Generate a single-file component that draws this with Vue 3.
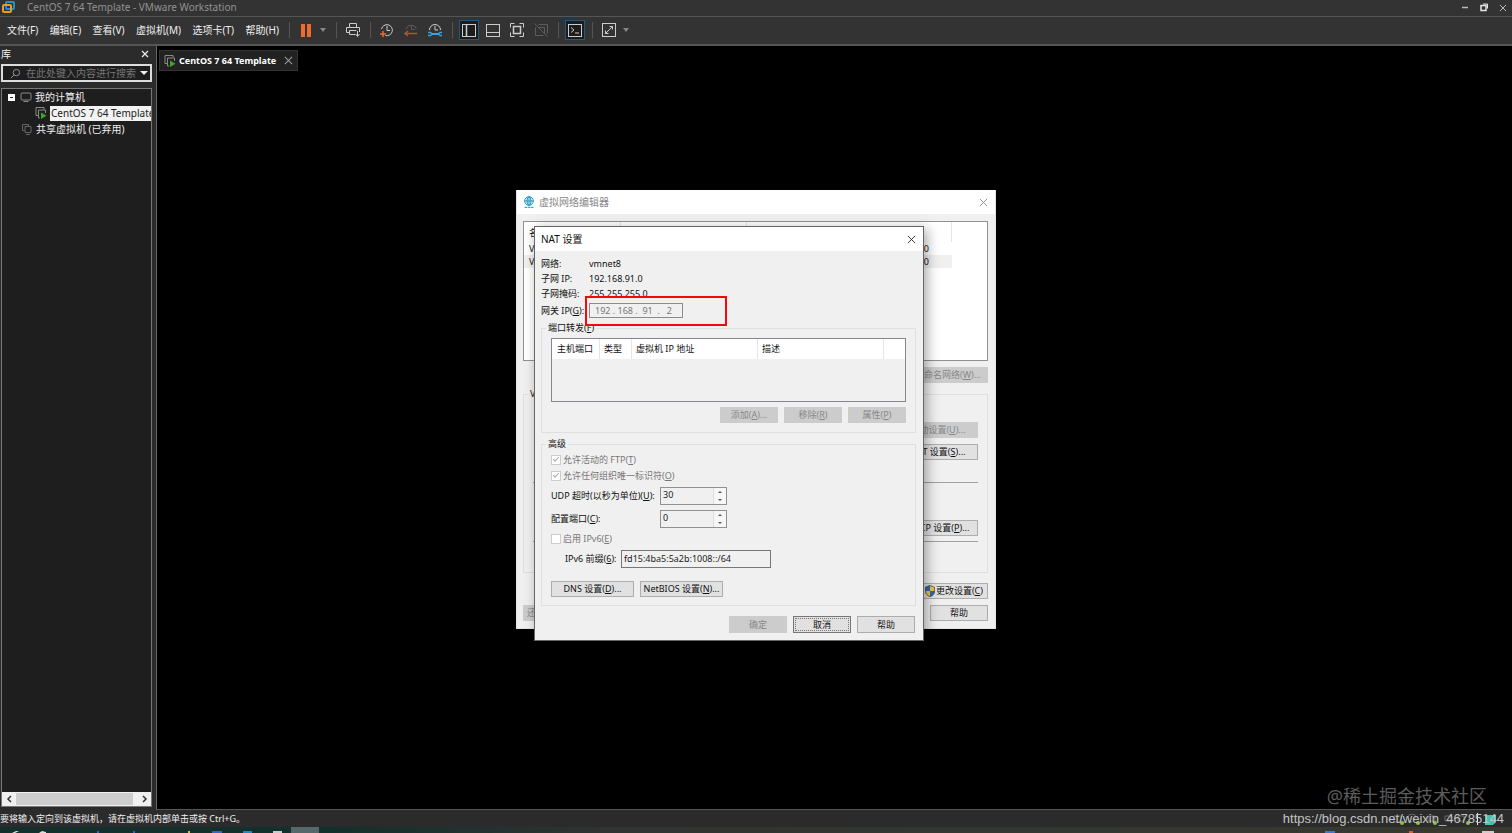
<template>
    <div class="workstation">
        <header class="titlebar">
            <svg class="titlebar__logo" viewBox="0 0 14 14" fill="none" stroke-width="2">
                <rect x="5" y="2" width="8" height="7" rx="1" stroke="#1d93c9" />
                <rect x="2" y="5" width="8" height="7" rx="1" stroke="#f39a1e" />
            </svg>
            <span class="titlebar__text">CentOS 7 64 Template - VMware Workstation</span>
            <div class="titlebar__controls">
                <button type="button" aria-label="Minimize">
                    <svg viewBox="0 0 10 10"><path d="M2 5.500h6" stroke="#bbb" stroke-width="1.500" /></svg>
                </button>
                <button type="button" aria-label="Restore">
                    <svg viewBox="0 0 10 10" fill="none" stroke="#e8e8e8"><path d="M4 2h4.500v4.500" /><rect x="2" y="3.500" width="5" height="5" stroke-width="1.500" /></svg>
                </button>
                <button type="button" aria-label="Close">
                    <svg viewBox="0 0 10 10"><path d="M2 3l6 6M8 3l-6 6" stroke="#bbb" /></svg>
                </button>
            </div>
        </header>

        <div class="toolbar">
            <nav class="menu">
                <button v-for="item in menuItems" :key="item" type="button">{{ item }}</button>
            </nav>
            <i class="sep"></i>
            <button class="tool" type="button" aria-label="Pause">
                <svg viewBox="0 0 20 20" fill="#ec6c30"><rect x="5" y="4" width="4" height="13" /><rect x="11" y="4" width="4" height="13" /></svg>
            </button>
            <i class="caret"></i>
            <i class="sep sep--wide"></i>
            <button class="tool" type="button" aria-label="Send">
                <svg viewBox="0 0 20 20"><path d="M6.500 7.500v-4h7v4M6 12.500H3.500v-5h13V12M6.500 10.500h7M6.500 10.500v4h6M14.500 11v5M12.500 14l2 2.500 2-2.500" /></svg>
            </button>
            <i class="sep"></i>
            <button class="tool" type="button" aria-label="Take snapshot">
                <svg viewBox="0 0 20 20"><path d="M4.500 9a5.500 5.500 0 1 1 4 6.500M10 6v4.500h3" /><path d="M3 14h6M6 11v6" stroke="#ec6c30" stroke-width="1.500" /></svg>
            </button>
            <button class="tool" type="button" aria-label="Revert snapshot">
                <svg viewBox="0 0 20 20"><path d="M5 9a5.500 5.500 0 0 1 10.500 0M10.500 6v3.500h3" stroke="#5d5d5d" /><path d="M4 13.500h12M7 11l-3 2.500 3 2.500" stroke="#ac5530" stroke-width="1.500" /></svg>
            </button>
            <button class="tool" type="button" aria-label="Manage snapshots">
                <svg viewBox="0 0 20 20"><path d="M4.500 10a5.500 5.500 0 1 1 11 0M10 6v4h3" /><path d="M6 14h8" stroke="#35a5df" stroke-width="2" /><path d="M3 12.500h2.500L7 14l-1.500 1.500H3M17 12.500h-2L13.500 14l1.500 1.500h2" stroke="#35a5df" stroke-width="1.500" /></svg>
            </button>
            <i class="sep"></i>
            <button class="tool tool--active" type="button" aria-label="Show library">
                <svg viewBox="0 0 20 20"><rect x="3.500" y="4.500" width="13" height="12" /><path d="M7.500 4.500v12" stroke-width="1.500" /></svg>
            </button>
            <button class="tool" type="button" aria-label="Show thumbnails">
                <svg viewBox="0 0 20 20"><rect x="3.500" y="4.500" width="13" height="12" /><path d="M3.500 12.500h13" /></svg>
            </button>
            <button class="tool" type="button" aria-label="Full screen">
                <svg viewBox="0 0 20 20"><path d="M3.500 7.500v-4h4M12.500 3.500h4v4M16.500 12.500v4h-4M7.500 16.500h-4v-4" /><rect x="6.500" y="6.500" width="7" height="7" stroke-width="1.500" /></svg>
            </button>
            <button class="tool" type="button" aria-label="Unity">
                <svg viewBox="0 0 20 20" class="dim"><path d="M7.500 4.500h9v9M4.500 7.500v8h8M7.500 7.500h6v6M3.500 3.500l13 13" /></svg>
            </button>
            <i class="sep"></i>
            <button class="tool tool--active" type="button" aria-label="Console view">
                <svg viewBox="0 0 20 20"><rect x="3.500" y="4.500" width="13" height="12" /><path d="M6 7.500l3 2.500-3 2.500M10 13h4" /></svg>
            </button>
            <i class="sep"></i>
            <button class="tool" type="button" aria-label="Stretch guest">
                <svg viewBox="0 0 20 20"><rect x="3.500" y="3.500" width="13" height="13" /><path d="M6.500 13.500l7-7M10.500 6.500h3v3M6.500 10.500v3h3" /></svg>
            </button>
            <i class="caret"></i>
        </div>

        <main class="workspace">
            <aside class="library">
                <div class="library__head">
                    <span>库</span>
                    <button type="button" aria-label="Close library">
                        <svg viewBox="0 0 10 10"><path d="M2 2l6 6M8 2l-6 6" stroke="#eee" stroke-width="1.200" /></svg>
                    </button>
                </div>
                <div class="search">
                    <svg viewBox="0 0 12 12" fill="none" stroke="#999"><circle cx="7" cy="5" r="3.500" /><path d="M4.500 7.500L1 11" /></svg>
                    <input type="text" aria-label="Search" placeholder="在此处键入内容进行搜索">
                    <i class="search__caret"></i>
                </div>
                <div class="tree">
                    <div class="tree__row">
                        <i class="tree__toggle"></i>
                        <svg class="tree__icon" viewBox="0 0 12 12" fill="none" stroke="#8a8a8a"><rect x="1" y="2" width="10" height="7" rx="1" /><path d="M3.500 10.500h5" /></svg>
                        <span>我的计算机</span>
                    </div>
                    <div class="tree__row tree__row--child">
                        <svg class="tree__icon" viewBox="0 0 12 12" fill="none" stroke="#8a8a8a"><path d="M3 8.500H1v-8h8v2" /><path d="M5 11H3.500V3h7v3" /><path d="M6 5.500l5.500 3.200L6 12z" fill="#3fa52a" stroke="none" /></svg>
                        <span class="tree__selected">CentOS 7 64 Template</span>
                    </div>
                    <div class="tree__row tree__row--shared">
                        <svg class="tree__icon" viewBox="0 0 12 12" fill="none" stroke="#666"><path d="M3.500 7.500h-2v-6h6v2M4 3.500h6v6H4zM5 11.500h4" /></svg>
                        <span>共享虚拟机 (已弃用)</span>
                    </div>
                    <div class="scrollbar">
                        <svg viewBox="0 0 12 12"><path d="M8 3L5 6l3 3" /></svg>
                        <i class="scrollbar__thumb"></i>
                        <svg viewBox="0 0 12 12"><path d="M5 3l3 3-3 3" /></svg>
                    </div>
                </div>
            </aside>
            <section class="console">
                <div class="tab">
                    <svg class="tree__icon" viewBox="0 0 12 12" fill="none" stroke="#8a8a8a"><path d="M3 8.500H1v-8h8v2" /><path d="M5 11H3.500V3h7v3" /><path d="M6 5.500l5.500 3.200L6 12z" fill="#3fa52a" stroke="none" /></svg>
                    <span>CentOS 7 64 Template</span>
                    <button type="button" aria-label="Close tab">
                        <svg viewBox="0 0 10 10"><path d="M1 1l8 8M9 1l-8 8" stroke="#999" stroke-width="1.200" /></svg>
                    </button>
                </div>
                <p class="brand">@稀土掘金技术社区</p>
            </section>
        </main>

        <footer class="statusbar">
            <span>要将输入定向到该虚拟机，请在虚拟机内部单击或按 Ctrl+G。</span>
            <svg class="devices" viewBox="0 0 112 16" fill="none" stroke="#666">
                <path d="M2 11V5h7v6zM20 11a4 4 0 1 1 4-4M36 5h7v5h-7zM53 5h7v5h-7zM66 5h6v5h-6z" />
                <g fill="#8cc63f" stroke="none"><circle cx="10" cy="12" r="2" /><circle cx="26" cy="12" r="2" /><circle cx="43" cy="12" r="2" /><circle cx="76" cy="12" r="2" /></g>
                <path d="M85.500 2v12" stroke="#eee" />
                <path d="M93 4h11v7l-3 3h-8z" fill="#35c9b0" stroke="none" />
            </svg>
            <a class="source" href="#">https://blog.csdn.net/weixin_46785144</a>
        </footer>

        <div class="taskbar">
            <svg width="320" height="6" viewBox="0 0 320 6">
                <rect x="291" width="28" height="6" fill="#56686a" />
                <path d="M12 6l4-2h3l-4 2zM39 6l3-2 4 1v1z" fill="#ddd" />
                <path d="M97 4h2v2h-2zM133 4h2v2h-2zM212 4h10v2h-10z" fill="#3566c9" />
                <path d="M188 4h2v2h-2z" fill="#c9c23a" />
                <path d="M243 4h9v2h-9z" fill="#2388c8" />
                <path d="M273 4h9v2h-9z" fill="#ccc" />
            </svg>
            <svg width="192" height="6" viewBox="0 0 192 6">
                <path d="M5 4h10v2H5z" fill="#3b78d6" />
                <path d="M89 4h4v2h-4z" fill="#e25a2a" />
                <path d="M162 4h12v2h-12z" fill="#ccc" />
            </svg>
        </div>

        <div class="desktop">
            <section class="editor" aria-label="虚拟网络编辑器">
                <div class="editor__title">
                    <svg viewBox="0 0 12 12" fill="none" stroke="#1a93bb"><circle cx="6" cy="5" r="4.300" /><ellipse cx="6" cy="5" rx="2" ry="4.300" /><path d="M6 .7v8.600M1.700 5h8.600M1.500 11.300h3M5 11.300h2M7.500 11.300h3" /></svg>
                    <span>虚拟网络编辑器</span>
                    <button type="button" aria-label="Close editor">
                        <svg viewBox="0 0 10 10"><path d="M1 1l8 8M9 1l-8 8" stroke="#888" /></svg>
                    </button>
                </div>
                <div class="editor__body">
                    <div class="networks">
                        <table>
                            <thead>
                                <tr><th>名称</th><th>类型</th><th>子网地址</th><th></th></tr>
                            </thead>
                            <tbody>
                                <tr v-for="net in networks" :key="net.name" :class="{ current: net.current }">
                                    <td>{{ net.name }}</td>
                                    <td>{{ net.type }}</td>
                                    <td class="networks__subnet">{{ net.subnet }}</td>
                                    <td></td>
                                </tr>
                            </tbody>
                        </table>
                    </div>
                    <button class="btn btn--long" type="button" disabled>重命名网络(<u>W</u>)...</button>
                    <fieldset class="group editor__group">
                        <legend>VMnet 信息</legend>
                        <button class="btn btn--long" type="button" disabled>自动设置(<u>U</u>)...</button>
                        <button class="btn btn--long" type="button">NAT 设置(<u>S</u>)...</button>
                        <hr>
                        <button class="btn btn--long" type="button">DHCP 设置(<u>P</u>)...</button>
                        <hr>
                    </fieldset>
                    <button class="btn btn--long btn--shield" type="button">
                        <svg viewBox="0 0 12 12"><path d="M6 0L1 2v4c0 3 2 5 5 6z" fill="#2d6cae" /><path d="M6 0l5 2v4c0 3-2 5-5 6z" fill="#f0c944" /><path d="M1 6h5v6C3 11 1 9 1 6z" fill="#f0c944" /><path d="M6 6h5c0 3-2 5-5 6z" fill="#2d6cae" /><path d="M6 .5L1.500 2.300V6c0 3 2 4.500 4.500 5.500C8.500 10.500 10.500 9 10.500 6V2.300z" fill="none" stroke="#4d5a66" stroke-width=".8" /></svg>
                        <span>更改设置(<u>C</u>)</span>
                    </button>
                    <div class="editor__footer">
                        <button class="btn btn--fit" type="button" disabled>还原默认设置</button>
                        <button class="btn" type="button">帮助</button>
                    </div>
                </div>
            </section>

            <section class="nat" aria-label="NAT 设置">
                <div class="nat__title">
                    <span>NAT 设置</span>
                    <button type="button" aria-label="Close">
                        <svg viewBox="0 0 10 10"><path d="M1 1l8 8M9 1l-8 8" stroke="#222" /></svg>
                    </button>
                </div>
                <form class="nat__body" @submit.prevent>
                    <div v-for="row in info" :key="row.label" class="info">
                        <span>{{ row.label }}</span>
                        <span>{{ row.value }}</span>
                    </div>
                    <div class="info info--gateway">
                        <label for="gateway">网关 IP(<u>G</u>):</label>
                        <input id="gateway" v-model="gateway" type="text" disabled>
                        <i class="marker"></i>
                    </div>

                    <fieldset class="group forwarding">
                        <legend>端口转发(<u>F</u>)</legend>
                        <div class="forwarding__list">
                            <table>
                                <thead>
                                    <tr>
                                        <th>主机端口</th>
                                        <th>类型</th>
                                        <th>虚拟机 IP 地址</th>
                                        <th>描述</th>
                                        <th></th>
                                    </tr>
                                </thead>
                            </table>
                        </div>
                        <div class="buttons">
                            <button class="btn" type="button" disabled>添加(<u>A</u>)...</button>
                            <button class="btn" type="button" disabled>移除(<u>R</u>)</button>
                            <button class="btn" type="button" disabled>属性(<u>P</u>)</button>
                        </div>
                    </fieldset>

                    <fieldset class="group advanced">
                        <legend>高级</legend>
                        <label class="check"><input type="checkbox" checked disabled>允许活动的 FTP(<u>T</u>)</label>
                        <label class="check"><input type="checkbox" checked disabled>允许任何组织唯一标识符(<u>O</u>)</label>
                        <div class="field field--first">
                            <label for="udp">UDP 超时(以秒为单位)(<u>U</u>):</label>
                            <span class="spin">
                                <input id="udp" v-model="udpTimeout" type="text">
                                <span class="spin__arrows"><i class="up"></i><i class="down"></i></span>
                            </span>
                        </div>
                        <div class="field">
                            <label for="port">配置端口(<u>C</u>):</label>
                            <span class="spin">
                                <input id="port" v-model="configPort" type="text">
                                <span class="spin__arrows"><i class="up"></i><i class="down"></i></span>
                            </span>
                        </div>
                        <label class="check check--ipv6"><input type="checkbox" disabled>启用 IPv6(<u>E</u>)</label>
                        <div class="prefix">
                            <label for="prefix">IPv6 前缀(<u>6</u>):</label>
                            <input id="prefix" v-model="ipv6Prefix" type="text">
                        </div>
                        <div class="buttons buttons--left">
                            <button class="btn btn--wide" type="button">DNS 设置(<u>D</u>)...</button>
                            <button class="btn btn--wide" type="button">NetBIOS 设置(<u>N</u>)...</button>
                        </div>
                    </fieldset>

                    <div class="buttons nat__footer">
                        <button class="btn" type="button" disabled>确定</button>
                        <button class="btn btn--focus" type="button">取消</button>
                        <button class="btn" type="button">帮助</button>
                    </div>
                </form>
            </section>
        </div>
    </div>
</template>

<script setup>
import { ref } from 'vue';

const menuItems = ['文件(F)', '编辑(E)', '查看(V)', '虚拟机(M)', '选项卡(T)', '帮助(H)'];

const networks = [
    { name: 'VMnet1', type: '仅主机模式', subnet: '192.168.85.0', current: false },
    { name: 'VMnet8', type: 'NAT 模式', subnet: '192.168.91.0', current: true },
];

const info = [
    { label: '网络:', value: 'vmnet8' },
    { label: '子网 IP:', value: '192.168.91.0' },
    { label: '子网掩码:', value: '255.255.255.0' },
];

const gateway = ref('192 . 168 .  91  .   2');
const udpTimeout = ref('30');
const configPort = ref('0');
const ipv6Prefix = ref('fd15:4ba5:5a2b:1008::/64');
</script>

<style>
body {
    margin: 0;
    background: #000;
}
</style>

<style scoped>
.workstation {
    position: relative;
    display: flex;
    flex-direction: column;
    height: 100vh;
    overflow: hidden;
    background: #2b2b2b;
    color: #f0f0f0;
    font-family: "Noto Sans", "Noto Sans CJK SC", sans-serif;
    font-size: 9px;
    line-height: 14px;
}

.workstation *,
.workstation *::before {
    box-sizing: border-box;
}

button {
    padding: 0;
    border: 0;
    background: none;
    color: inherit;
    font: inherit;
    white-space: nowrap;
}

input {
    min-width: 0;
    margin: 0;
    font: inherit;
}

svg {
    flex: none;
}

.titlebar {
    display: flex;
    align-items: center;
    height: 17px;
    padding: 0 4px 2px 1px;
    border-bottom: 1px solid #555;
    background: #333;
    color: #929292;
    font-size: 10px;
}

.titlebar__logo {
    width: 14px;
    height: 14px;
    margin-right: 12px;
}

.titlebar__controls {
    display: flex;
    gap: 9px;
    margin-left: auto;
}

.titlebar__controls button,
.titlebar__controls svg {
    display: block;
    width: 10px;
    height: 10px;
}

.toolbar {
    display: flex;
    align-items: center;
    gap: 4px;
    height: 29px;
    padding: 0 0 2px 7px;
    border-bottom: 2px solid #555;
    background: #333;
}

.menu {
    display: flex;
    justify-content: space-between;
    width: 272px;
    margin-right: 3px;
    font-size: 10px;
}

.sep {
    width: 6px;
    height: 16px;
    background: linear-gradient(#555, #555) center / 1px 100% no-repeat;
}

.sep--wide {
    margin-left: 3px;
}

.caret {
    border: 3px solid transparent;
    border-top: 4px solid #888;
    border-bottom: 0;
}

.tool {
    width: 20px;
    height: 20px;
}

.tool svg {
    display: block;
    width: 20px;
    height: 20px;
    fill: none;
    stroke: #ccc;
}

.tool svg[fill] {
    fill: #ec6c30;
    stroke: none;
}

.tool .dim {
    stroke: #5d5d5d;
}

.tool--active {
    background: #1c1c1c;
    box-shadow: inset 0 0 0 1px #24597c;
}

.workspace {
    display: flex;
    flex: 1;
    min-height: 0;
}

.library {
    display: flex;
    flex-direction: column;
    width: 156px;
    padding: 0 4px 3px 1px;
    background: #2b2b2b;
    font-size: 10px;
}

.library__head {
    display: flex;
    align-items: center;
    justify-content: space-between;
    height: 16px;
    padding-right: 2px;
}

.library__head svg {
    display: block;
    width: 10px;
    height: 10px;
}

.search {
    display: flex;
    align-items: center;
    height: 18px;
    margin: 2px 0 6px;
    padding: 0 2px 0 7px;
    border: 2px solid #ddd;
    background: #1e1e1e;
}

.search svg {
    width: 11px;
    height: 11px;
    margin-right: 5px;
}

.search input {
    flex: 1;
    padding: 0;
    border: 0;
    background: none;
    color: #ddd;
}

.search input::placeholder {
    color: #777;
}

.search__caret {
    border: 4px solid transparent;
    border-top-color: #eee;
    border-bottom: 0;
}

.tree {
    display: flex;
    flex: 1;
    flex-direction: column;
    min-height: 0;
    overflow: hidden;
    border: 1px solid #777;
    background: #1e1e1e;
}

.tree__row {
    display: flex;
    align-items: center;
    height: 16px;
    padding-left: 6px;
    white-space: nowrap;
}

.tree__row--child {
    padding-left: 33px;
}

.tree__row--shared {
    padding-left: 19px;
}

.tree__toggle {
    width: 7px;
    height: 7px;
    margin-right: 5px;
    border: 1px solid #fff;
    background: linear-gradient(#222, #222) center / 3px 1px no-repeat #fff;
}

.tree__icon {
    width: 12px;
    height: 12px;
    margin-right: 3px;
}

.tree__selected {
    height: 15px;
    padding-left: 1px;
    background: #f2f2f2;
    color: #222;
}

.scrollbar {
    display: flex;
    align-items: center;
    height: 14px;
    margin-top: auto;
    background: #f0f0f0;
}

.scrollbar svg {
    width: 14px;
    height: 12px;
    fill: none;
    stroke: #333;
    stroke-width: 1.5;
}

.scrollbar__thumb {
    flex: 1;
    height: 12px;
    margin-right: 4px;
    background: #cdcdcd;
}

.console {
    display: flex;
    flex: 1;
    flex-direction: column;
    align-items: flex-start;
    justify-content: space-between;
    border-bottom: 1px solid #555;
    border-left: 1px solid #666;
    background: #000;
}

.tab {
    display: flex;
    align-items: center;
    gap: 8px;
    height: 21px;
    margin: 4px 0 0 2px;
    padding: 0 4px;
    border: 1px solid #333;
    background: #222;
    color: #fff;
    font-weight: 700;
}

.tab .tree__icon {
    margin-right: -5px;
}

.tab button svg {
    display: block;
    width: 9px;
    height: 9px;
}

.brand {
    align-self: flex-end;
    margin: 0 25px 2px 0;
    color: #5c5c5c;
    font-size: 18px;
    line-height: 22px;
}

.statusbar {
    position: relative;
    display: flex;
    align-items: center;
    justify-content: space-between;
    height: 17px;
    padding: 0 8px 0 0;
}

.devices {
    position: absolute;
    right: 8px;
    bottom: 0;
    width: 112px;
    height: 16px;
}

.source {
    position: relative;
    color: #c4c4c4;
    font-family: "Liberation Sans", sans-serif;
    font-size: 13px;
    text-decoration: none;
}

.taskbar {
    display: flex;
    justify-content: space-between;
    height: 6px;
    background: linear-gradient(90deg, #14302c, #14302c 22%, #2f3331 40%, #393a30);
}

/* dialog windows */
.desktop {
    position: absolute;
    top: 190px;
    left: 50%;
    width: 480px;
    margin-left: -240px;
    color: #111;
}

.editor {
    height: 439px;
    border: 1px solid #e4e4e4;
    border-top: 0;
    background: #f0f0f0;
}

.editor__title,
.nat__title {
    display: flex;
    align-items: center;
    justify-content: space-between;
    height: 24px;
    padding: 0 7px 0 6px;
    background: #fff;
    font-size: 10px;
}

.editor__title {
    gap: 4px;
    color: #888;
}

.editor__title > svg {
    width: 12px;
    height: 12px;
}

.editor__title span {
    flex: 1;
}

.editor__title button svg,
.nat__title button svg {
    display: block;
    width: 9px;
    height: 9px;
}

.editor__body {
    display: flex;
    flex-direction: column;
    align-items: flex-end;
    padding: 7px 7px 0 6px;
}

.networks {
    width: 100%;
    height: 140px;
    margin-bottom: 6px;
    border: 1px solid #919191;
    background: #fff;
}

.networks table {
    width: 428px;
    border-spacing: 0;
    table-layout: fixed;
}

.networks th,
.networks td {
    height: 13px;
    padding: 0 5px;
    font-weight: 400;
    line-height: 13px;
    text-align: left;
}

.networks th {
    width: 126px;
    height: 20px;
    border-right: 1px solid #e5e5e5;
}

.networks th:first-child {
    width: 97px;
}

.networks th:nth-child(3) {
    width: 182px;
    border-right: 0;
}

.networks th:nth-child(4) {
    width: 23px;
}

.networks .networks__subnet {
    padding-right: 0;
    text-align: right;
}

.networks .current td {
    background: #f0f0f0;
}

.btn {
    display: block;
    width: 58px;
    height: 16px;
    border: 1px solid #adadad;
    background: #e1e1e1;
    line-height: 14px;
}

.btn:disabled {
    border-color: #ccc;
    background: #ccc;
    color: #888;
}

.btn--long {
    width: 80px;
}

.btn--wide {
    width: 83px;
}

.btn--fit {
    width: auto;
    padding: 0 3px;
}

.btn--focus {
    border-color: #777;
    outline: 1px dotted #777;
    outline-offset: -3px;
}

.btn--shield {
    display: flex;
    align-items: center;
    justify-content: flex-end;
    padding-right: 4px;
    margin-bottom: 6px;
}

.btn--shield svg {
    width: 12px;
    height: 12px;
}

.group {
    display: flex;
    flex-direction: column;
    min-width: 0;
    margin: 0;
    padding: 0 9px;
    border: 1px solid #dfdfdf;
}

.group legend {
    height: 14px;
    margin-left: -5px;
    padding: 0 2px;
}

.editor__group {
    align-items: flex-end;
    width: 100%;
    height: 186px;
    margin: 4px 0 10px;
    padding-top: 21px;
}

.editor__group .btn + .btn {
    margin-top: 6px;
}

.editor__group hr {
    width: 100%;
    margin: 22px 0 37px;
    border: 0;
    border-top: 1px solid #a0a0a0;
}

.editor__group hr:last-child {
    margin: 5px 0 0;
}

.editor__footer {
    display: flex;
    justify-content: space-between;
    width: 100%;
}

.nat {
    position: absolute;
    top: 36px;
    left: 18px;
    width: 390px;
    border: 1px solid #666;
    background: #f0f0f0;
    box-shadow: 3px 3px 12px rgba(0, 0, 0, .35);
}

.nat__body {
    padding: 5px 7px 7px 6px;
}

.info {
    position: relative;
    display: grid;
    grid-template-columns: 48px 1fr;
    align-items: center;
    height: 15px;
    white-space: nowrap;
}

.info--gateway {
    height: 19px;
}

.info input {
    width: 94px;
    height: 15px;
    padding: 0 5px;
    border: 1px solid #8c8c8c;
    background: #f0f0f0;
    color: #777;
    white-space: pre;
}

.marker {
    position: absolute;
    top: -5px;
    left: 44px;
    width: 142px;
    height: 30px;
    border: 2px solid #f00a0a;
    pointer-events: none;
}

.forwarding {
    margin: 1px 0 4px;
    padding-top: 3px;
    padding-bottom: 9px;
}

.forwarding__list {
    height: 64px;
    margin-bottom: 5px;
    border: 1px solid #828790;
}

.forwarding__list table {
    width: 100%;
    border-spacing: 0;
    table-layout: fixed;
    background: #fff;
}

.forwarding__list th {
    height: 20px;
    padding: 0 0 0 4px;
    border-right: 1px solid #e5e5e5;
    font-weight: 400;
    text-align: left;
}

.forwarding__list th:nth-child(1) {
    width: 48px;
    padding-left: 5px;
}

.forwarding__list th:nth-child(2) {
    width: 32px;
}

.forwarding__list th:nth-child(3),
.forwarding__list th:nth-child(4) {
    width: 126px;
}

.forwarding__list th:last-child {
    border-right: 0;
}

.buttons {
    display: flex;
    justify-content: flex-end;
    gap: 6px;
}

.buttons--left {
    justify-content: flex-start;
    margin-top: 13px;
}

.advanced {
    padding-top: 1px;
    padding-bottom: 8px;
}

.check {
    display: flex;
    align-items: center;
    height: 16px;
    color: #777;
    white-space: pre;
}

.check input {
    width: 10px;
    height: 10px;
    margin-right: 2px;
    border: 1px solid #ccc;
    appearance: none;
    background: #fff;
}

.check input:checked::before {
    display: block;
    width: 6px;
    height: 3px;
    margin: 1px;
    border: solid #aaa;
    border-width: 0 0 1px 1px;
    content: "";
    transform: rotate(-45deg);
}

.check--ipv6 {
    margin: 3px 0;
}

.field {
    display: grid;
    grid-template-columns: 109px 67px;
    align-items: center;
    height: 18px;
    margin-top: 5px;
    white-space: nowrap;
}

.field--first {
    margin-top: 3px;
}

.spin {
    display: flex;
    height: 18px;
    border: 1px solid #919191;
}

.spin input {
    flex: 1;
    width: 50px;
    padding: 0 2px 2px;
    border: 0;
    background: none;
    color: #222;
}

.spin__arrows {
    display: flex;
    flex-direction: column;
    align-items: center;
    justify-content: space-around;
    width: 13px;
    border-left: 1px solid #ddd;
    background: #f6f6f6;
}

.up,
.down {
    border: 2px solid transparent;
    border-top: 0;
    border-bottom-color: #555;
}

.down {
    border-top: 2px solid #555;
    border-bottom: 0;
}

.prefix {
    display: grid;
    grid-template-columns: 56px 150px;
    align-items: center;
    height: 18px;
    padding-left: 14px;
    white-space: nowrap;
}

.prefix input {
    height: 18px;
    padding: 0 2px 2px;
    border: 1px solid #777;
    background: #f0f0f0;
    color: #222;
}

.nat__footer {
    margin-top: 10px;
    padding-right: 1px;
}

.nat__footer .btn {
    height: 17px;
}
</style>
